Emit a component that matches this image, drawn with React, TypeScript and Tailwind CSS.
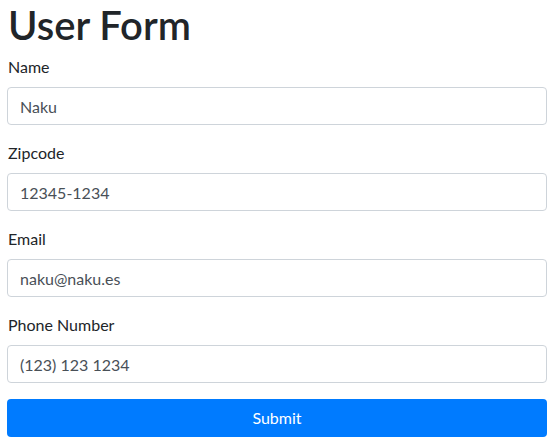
import React, { useState } from 'react';

const fields = [
  { label: 'Name', value: 'Naku' },
  { label: 'Zipcode', value: '12345-1234' },
  { label: 'Email', value: 'naku@naku.es' },
  { label: 'Phone Number', value: '(123) 123 1234' },
];

export default function App() {
  const [values, setValues] = useState(fields.map((f) => f.value));

  return (
    <div className="min-h-[448px] bg-white pl-[7px] pr-[8px] text-[#212529] font-['Lato','Open_Sans',sans-serif]">
      <h1 className="text-[40px] font-semibold leading-[50px] mb-[5px] pl-px">User Form</h1>
      <form onSubmit={(e) => e.preventDefault()}>
        {fields.map((f, i) => (
          <div key={f.label} className="mb-4">
            <label className="block text-base leading-6 mb-2 pl-px">{f.label}</label>
            <input
              type="text"
              value={values[i]}
              onChange={(e) => {
                const next = [...values];
                next[i] = e.target.value;
                setValues(next);
              }}
              className="block w-full h-[38px] px-3 text-base text-[#495057] bg-white border border-[#ced4da] rounded outline-none"
            />
          </div>
        ))}
        <button
          type="submit"
          className="block w-full h-[38px] bg-[#007bff] text-white text-base rounded"
        >
          Submit
        </button>
      </form>
    </div>
  );
}
